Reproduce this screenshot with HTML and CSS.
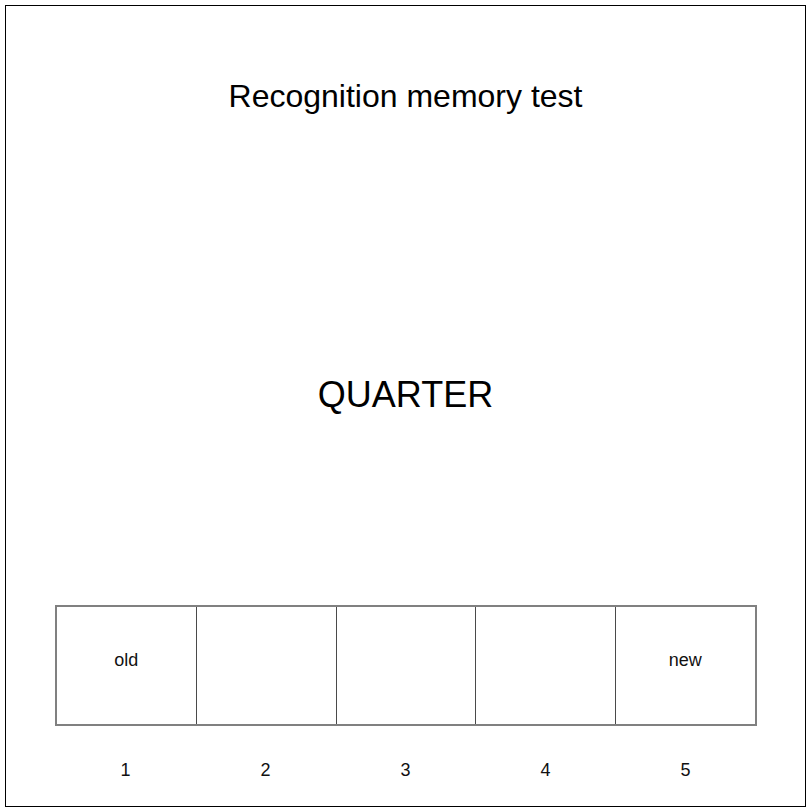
FILE: index.html
```html
<!DOCTYPE html>
<html lang="en">
<head>
  <meta charset="UTF-8">
  <title>Recognition memory test</title>
  <link rel="stylesheet" href="styles.css">
</head>
<body>
  <div class="frame">
    <h1 class="title">Recognition memory test</h1>
    <div class="word">QUARTER</div>
    <div class="scale">
      <div class="cell">old</div>
      <div class="cell"></div>
      <div class="cell"></div>
      <div class="cell"></div>
      <div class="cell">new</div>
    </div>
    <div class="numbers">
      <span>1</span>
      <span>2</span>
      <span>3</span>
      <span>4</span>
      <span>5</span>
    </div>
  </div>
</body>
</html>
```

FILE: styles.css
```css
* {
  margin: 0;
  padding: 0;
  box-sizing: border-box;
}

body {
  font-family: "Liberation Sans", Arial, sans-serif;
  background: #fff;
  color: #000;
}

.frame {
  margin: 5px;
  width: 801px;
  height: 802px;
  border: 1px solid #000;
  display: flex;
  flex-direction: column;
  align-items: center;
}

.title {
  margin-top: 72px;
  font-size: 32px;
  font-weight: normal;
  line-height: 36px;
}

.word {
  margin-top: 261px;
  font-size: 36px;
  line-height: 40px;
}

.scale {
  margin-top: 190px;
  width: 702px;
  height: 121px;
  border: 2px solid #808080;
  display: grid;
  grid-template-columns: repeat(5, 1fr);
}

.cell {
  padding-top: 43px;
  font-size: 18px;
  line-height: 20px;
  text-align: center;
  color: #111;
}

.cell + .cell {
  border-left: 1px solid #4a4a4a;
}

.numbers {
  margin-top: 34px;
  width: 700px;
  display: grid;
  grid-template-columns: repeat(5, 1fr);
  font-size: 18px;
  line-height: 20px;
  text-align: center;
  color: #111;
}
```
